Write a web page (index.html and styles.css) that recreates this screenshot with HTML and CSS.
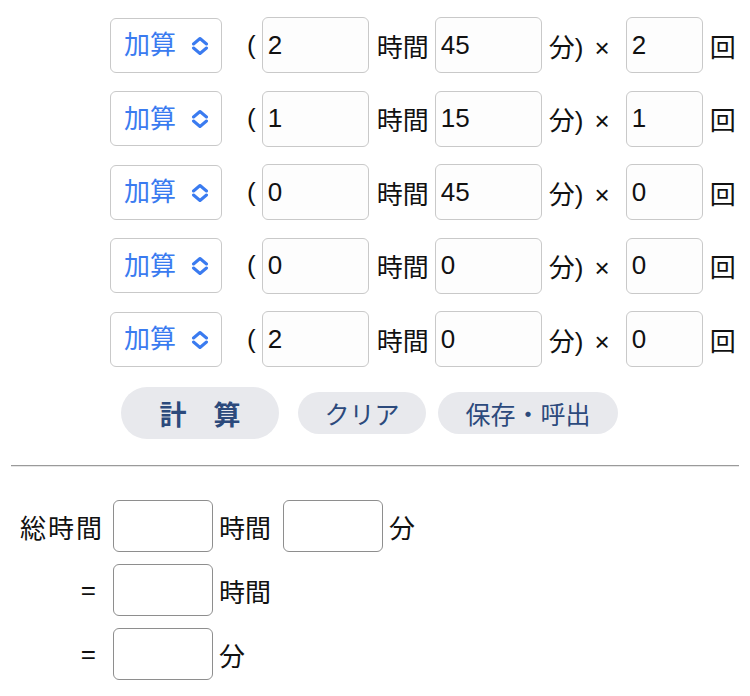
FILE: index.html
```html
<!DOCTYPE html>
<html lang="ja">
<head>
    <meta charset="UTF-8">
    <meta name="viewport" content="width=device-width, initial-scale=1.0">
    <title>時間計算</title>
    <link rel="stylesheet" href="styles.css">
</head>
<body>
    <div class="calc">
        <div class="rows">
            <div class="row">
                <div class="op">
                    <select class="op-select"><option>加算</option><option>減算</option></select>
                    <svg class="chev" width="18" height="18" viewBox="0 0 18 18"><path d="M2.5 7 L9 1.5 L15.5 7 M2.5 11 L9 16.5 L15.5 11" fill="none" stroke="#3a7bf0" stroke-width="3" stroke-linecap="round" stroke-linejoin="round"/></svg>
                </div>
                <span class="paren">(</span>
                <input class="num" type="text" value="2">
                <span class="unit">時間</span>
                <input class="num" type="text" value="45">
                <span class="unit-min">分) ×</span>
                <input class="num cnt" type="text" value="2">
                <span class="unit-cnt">回</span>
            </div>
            <div class="row">
                <div class="op">
                    <select class="op-select"><option>加算</option><option>減算</option></select>
                    <svg class="chev" width="18" height="18" viewBox="0 0 18 18"><path d="M2.5 7 L9 1.5 L15.5 7 M2.5 11 L9 16.5 L15.5 11" fill="none" stroke="#3a7bf0" stroke-width="3" stroke-linecap="round" stroke-linejoin="round"/></svg>
                </div>
                <span class="paren">(</span>
                <input class="num" type="text" value="1">
                <span class="unit">時間</span>
                <input class="num" type="text" value="15">
                <span class="unit-min">分) ×</span>
                <input class="num cnt" type="text" value="1">
                <span class="unit-cnt">回</span>
            </div>
            <div class="row">
                <div class="op">
                    <select class="op-select"><option>加算</option><option>減算</option></select>
                    <svg class="chev" width="18" height="18" viewBox="0 0 18 18"><path d="M2.5 7 L9 1.5 L15.5 7 M2.5 11 L9 16.5 L15.5 11" fill="none" stroke="#3a7bf0" stroke-width="3" stroke-linecap="round" stroke-linejoin="round"/></svg>
                </div>
                <span class="paren">(</span>
                <input class="num" type="text" value="0">
                <span class="unit">時間</span>
                <input class="num" type="text" value="45">
                <span class="unit-min">分) ×</span>
                <input class="num cnt" type="text" value="0">
                <span class="unit-cnt">回</span>
            </div>
            <div class="row">
                <div class="op">
                    <select class="op-select"><option>加算</option><option>減算</option></select>
                    <svg class="chev" width="18" height="18" viewBox="0 0 18 18"><path d="M2.5 7 L9 1.5 L15.5 7 M2.5 11 L9 16.5 L15.5 11" fill="none" stroke="#3a7bf0" stroke-width="3" stroke-linecap="round" stroke-linejoin="round"/></svg>
                </div>
                <span class="paren">(</span>
                <input class="num" type="text" value="0">
                <span class="unit">時間</span>
                <input class="num" type="text" value="0">
                <span class="unit-min">分) ×</span>
                <input class="num cnt" type="text" value="0">
                <span class="unit-cnt">回</span>
            </div>
            <div class="row">
                <div class="op">
                    <select class="op-select"><option>加算</option><option>減算</option></select>
                    <svg class="chev" width="18" height="18" viewBox="0 0 18 18"><path d="M2.5 7 L9 1.5 L15.5 7 M2.5 11 L9 16.5 L15.5 11" fill="none" stroke="#3a7bf0" stroke-width="3" stroke-linecap="round" stroke-linejoin="round"/></svg>
                </div>
                <span class="paren">(</span>
                <input class="num" type="text" value="2">
                <span class="unit">時間</span>
                <input class="num" type="text" value="0">
                <span class="unit-min">分) ×</span>
                <input class="num cnt" type="text" value="0">
                <span class="unit-cnt">回</span>
            </div>
        </div>

        <div class="btns">
            <button class="btn btn-calc">計　算</button>
            <button class="btn btn-clear">クリア</button>
            <button class="btn btn-save">保存・呼出</button>
        </div>

        <hr class="sep">

        <div class="totals">
            <div class="total-row">
                <span class="lbl total">総時間</span>
                <input class="box" type="text">
                <span class="t-unit t-hour">時間</span>
                <input class="box" type="text">
                <span class="t-unit">分</span>
            </div>
            <div class="total-row">
                <span class="lbl eq">=</span>
                <input class="box" type="text">
                <span class="t-unit">時間</span>
            </div>
            <div class="total-row">
                <span class="lbl eq">=</span>
                <input class="box" type="text">
                <span class="t-unit">分</span>
            </div>
        </div>
    </div>
</body>
</html>
```

FILE: styles.css
```css
body {
    margin: 0;
    font-family: 'Liberation Sans', 'Noto Sans CJK JP', sans-serif;
    font-size: 26px;
    color: #111;
    background-color: #fff;
}
.calc {
    padding-top: 17px;
}
.rows {
    display: flex;
    flex-direction: column;
    gap: 17.5px;
    padding-left: 110px;
}
.row {
    display: flex;
    align-items: center;
    height: 56px;
}
.op {
    position: relative;
    width: 112px;
    height: 55px;
}
.op-select {
    appearance: none;
    -webkit-appearance: none;
    width: 100%;
    height: 100%;
    margin: 0;
    padding: 0 0 0 13px;
    border: 1px solid #c9c9c9;
    border-radius: 6px;
    background-color: #fff;
    color: #3a7bf0;
    font-family: inherit;
    font-size: 26px;
}
.chev {
    position: absolute;
    left: 81px;
    top: 19px;
    pointer-events: none;
}
.paren {
    margin-left: 25px;
    margin-right: 6px;
}
.num {
    box-sizing: border-box;
    width: 107px;
    height: 56px;
    margin: 0;
    padding: 0 0 0 5px;
    border: 1px solid #c9c9c9;
    border-radius: 6px;
    background-color: #fdfdfd;
    font-family: inherit;
    font-size: 26px;
    color: #111;
}
.num.cnt {
    width: 77px;
}
.unit {
    margin: 0 6px 0 8px;
}
.unit-min {
    margin: 0 16px 0 7px;
    word-spacing: 4px;
}
.unit-cnt {
    margin-left: 7px;
}
.btns {
    display: flex;
    align-items: center;
    margin-top: 20px;
    padding-left: 121px;
}
.btn {
    border: none;
    border-radius: 26px;
    background-color: #e8e9ed;
    color: #2c4a7c;
    font-family: inherit;
    padding: 0;
    cursor: pointer;
}
.btn-calc {
    width: 158px;
    height: 52px;
    font-size: 27px;
    font-weight: bold;
}
.btn-clear {
    width: 128px;
    height: 42px;
    margin-left: 19px;
    font-size: 25px;
}
.btn-save {
    width: 180px;
    height: 42px;
    margin-left: 12px;
    font-size: 25px;
}
.sep {
    margin: 26px 11px 0;
    border: none;
    border-top: 1px solid #9a9a9a;
    border-bottom: 1px solid #e6e6e6;
}
.totals {
    display: flex;
    flex-direction: column;
    gap: 12px;
    margin-top: 33px;
    padding-left: 12px;
}
.total-row {
    display: flex;
    align-items: center;
    height: 52px;
}
.lbl {
    width: 92px;
    margin-right: 9px;
    text-align: right;
}
.lbl.total {
    letter-spacing: 2px;
}
.lbl.eq {
    box-sizing: border-box;
    padding-right: 8px;
}
.box {
    box-sizing: border-box;
    width: 100px;
    height: 52px;
    margin: 0;
    border: 1px solid #8e8e8e;
    border-radius: 6px;
    background-color: #fff;
    font-family: inherit;
    font-size: 26px;
}
.t-unit {
    margin-left: 6px;
}
.t-hour {
    margin-right: 12px;
}
```
